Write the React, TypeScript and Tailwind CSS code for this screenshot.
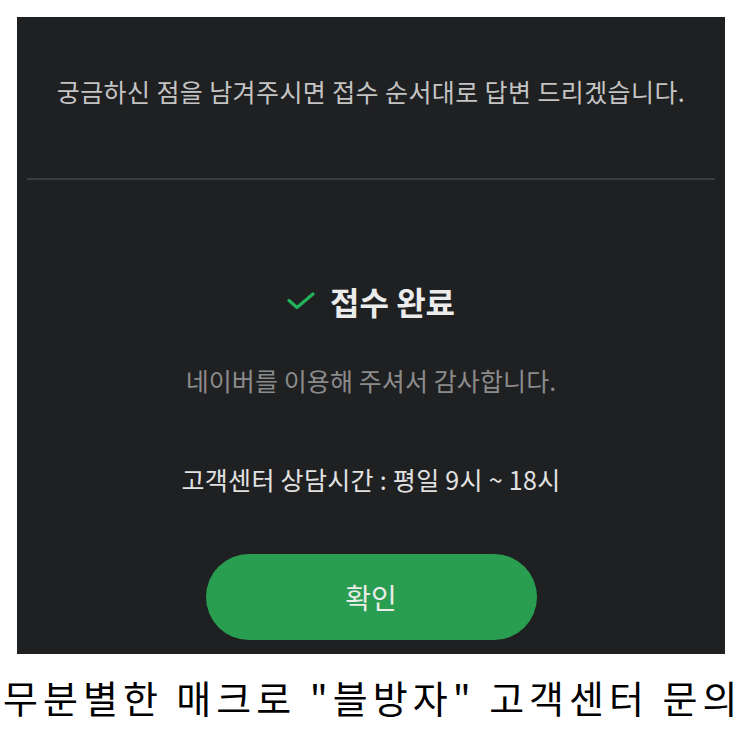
export default function App() {
  return (
    <div className="w-[743px] h-[743px] bg-white overflow-hidden" style={{ fontFamily: '"Noto Sans CJK KR", "Noto Sans", sans-serif' }}>
      <div className="pt-[17px] pl-[17px]">
        <div className="w-[708px] h-[637px] bg-[#1f2022] flex flex-col items-center">
          <p className="mt-[57px] text-[25px] leading-[34px] text-[#c4c4c4] tracking-[0.4px] whitespace-nowrap">
            궁금하신 점을 남겨주시면 접수 순서대로 답변 드리겠습니다.
          </p>
          <div className="mt-[70px] w-[688px] h-[2px] bg-[#3a3b3d]" />
          <div className="mt-[101px] flex items-center gap-[15px]">
            <svg width="28" height="18" viewBox="0 0 28 18" fill="none">
              <path d="M2 8.5 L10 15.5 L26 2" stroke="#22b25a" strokeWidth="3.2" strokeLinecap="round" strokeLinejoin="round" />
            </svg>
            <span className="text-[32px] leading-[40px] font-bold text-[#ececec]">접수 완료</span>
          </div>
          <p className="mt-[42px] text-[25px] leading-[34px] text-[#8b8b8b] tracking-[0.1px] whitespace-nowrap">
            네이버를 이용해 주셔서 감사합니다.
          </p>
          <p className="mt-[65px] text-[25px] leading-[34px] text-[#e2e2e2] tracking-[0.3px] whitespace-nowrap">
            고객센터 상담시간 : 평일 9시 ~ 18시
          </p>
          <button className="mt-[58px] w-[331px] h-[86px] rounded-full bg-[#2a9e50] text-[28px] text-[#ececec]">
            확인
          </button>
        </div>
      </div>
      <p className="mt-[20px] pl-[3px] text-[38px] leading-[46px] text-black tracking-[5px] whitespace-nowrap">
        무분별한 매크로 "블방자" 고객센터 문의
      </p>
    </div>
  );
}
